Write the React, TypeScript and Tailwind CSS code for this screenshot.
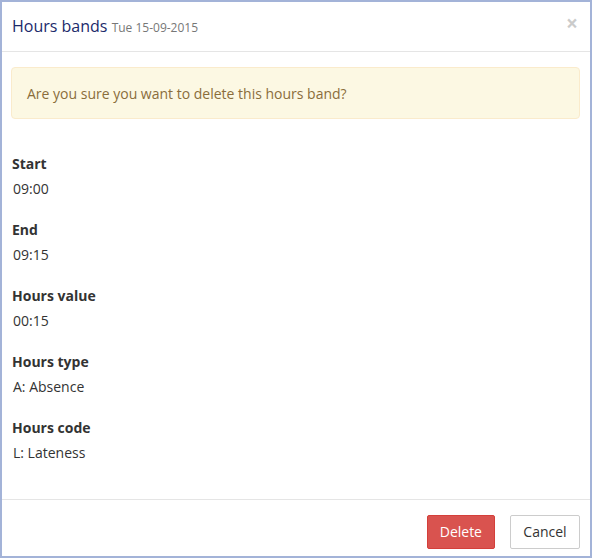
const fields = [
  { label: 'Start', value: '09:00' },
  { label: 'End', value: '09:15' },
  { label: 'Hours value', value: '00:15' },
  { label: 'Hours type', value: 'A: Absence' },
  { label: 'Hours code', value: 'L: Lateness' },
];

export default function App() {
  return (
    <div
      className="w-[592px] h-[558px] border-2 border-[#a3b3d8] bg-white flex flex-col text-[14px] text-[#333]"
      style={{ fontFamily: '"Open Sans", "Liberation Sans", sans-serif' }}
    >
      {/* header */}
      <div className="h-[50px] shrink-0 border-b border-[#e5e5e5] flex items-center justify-between pl-[10px] pr-[12px]">
        <h4 className="text-[16px] leading-[24px] text-[#1b2a6b] font-normal mt-[1px]">
          Hours bands <small className="text-[12px] text-[#777]">Tue 15-09-2015</small>
        </h4>
        <button className="text-[21px] leading-none font-bold text-black opacity-20 mt-[-6px]">×</button>
      </div>

      {/* body */}
      <div className="flex-1 pt-[15px] pl-[9px] pr-[10px]">
        <div className="h-[52px] rounded-[4px] border border-[#faebcc] bg-[#fcf8e3] text-[#8a6d3b] px-[15px] flex items-center">
          Are you sure you want to delete this hours band?
        </div>

        <div className="mt-[35px] pl-[1px] flex flex-col gap-[21px]">
          {fields.map((f) => (
            <div key={f.label} className="flex flex-col gap-[5px]">
              <div className="font-bold leading-[20px]">{f.label}</div>
              <div className="leading-[20px] pl-[1px]">{f.value}</div>
            </div>
          ))}
        </div>
      </div>

      {/* footer */}
      <div className="h-[57px] shrink-0 border-t border-[#e5e5e5] pt-[15px] pr-[10px] flex justify-end items-start gap-[15px]">
        <button className="h-[34px] px-[12px] rounded-[2px] bg-[#d9534f] border border-[#d43f3a] text-white leading-[20px]">
          Delete
        </button>
        <button className="h-[34px] w-[70px] px-[12px] rounded-[2px] bg-white border border-[#ccc] text-[#333] leading-[20px]">
          Cancel
        </button>
      </div>
    </div>
  );
}
